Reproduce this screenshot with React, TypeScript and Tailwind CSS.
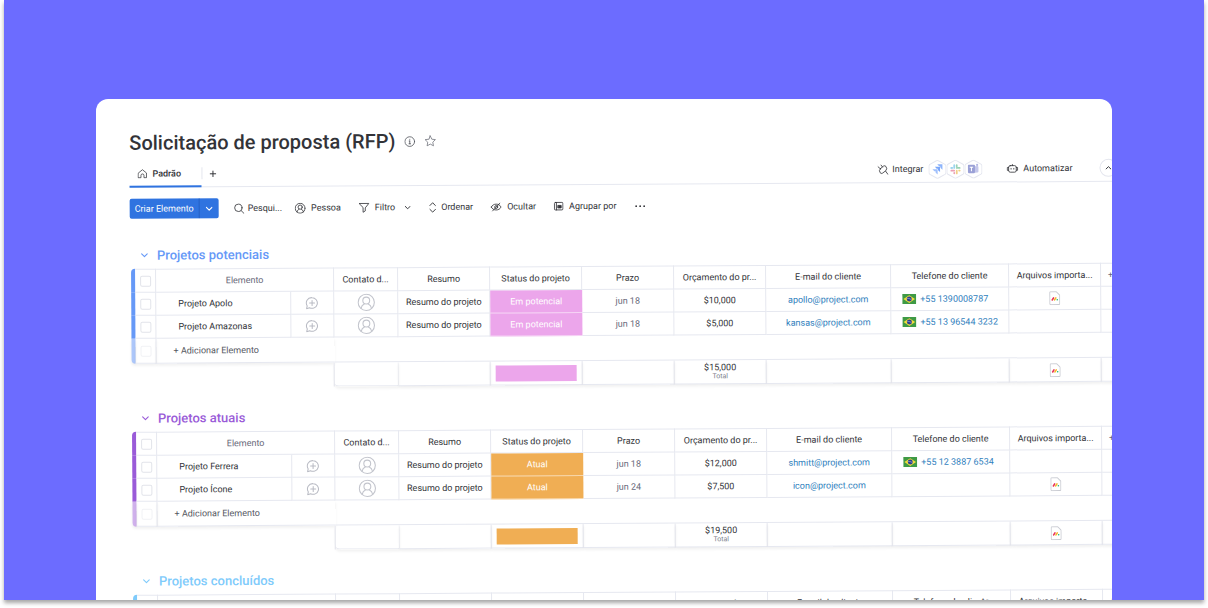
import type { ReactNode } from "react";

type Item = {
  name: string;
  date: string;
  budget: string;
  email: string;
  phone?: string;
  file?: boolean;
};

type Group = {
  title: string;
  text: string;
  bar: string;
  barLight: string;
  status: string;
  statusBg: string;
  total: string;
  items: Item[];
};

const GROUPS: Group[] = [
  {
    title: "Projetos potenciais",
    text: "text-[#6699f7]",
    bar: "bg-[#6699f7]",
    barLight: "bg-[#adc7fa]",
    status: "Em potencial",
    statusBg: "bg-[#eca6eb]",
    total: "$15,000",
    items: [
      { name: "Projeto Apolo", date: "jun 18", budget: "$10,000", email: "apollo@project.com", phone: "+55 1390008787", file: true },
      { name: "Projeto Amazonas", date: "jun 18", budget: "$5,000", email: "kansas@project.com", phone: "+55 13 96544 3232" },
    ],
  },
  {
    title: "Projetos atuais",
    text: "text-[#9a5bd8]",
    bar: "bg-[#9a5bd8]",
    barLight: "bg-[#d0b1ec]",
    status: "Atual",
    statusBg: "bg-[#f0ae54]",
    total: "$19,500",
    items: [
      { name: "Projeto Ferrera", date: "jun 18", budget: "$12,000", email: "shmitt@project.com", phone: "+55 12 3887 6534" },
      { name: "Projeto Ícone", date: "jun 24", budget: "$7,500", email: "icon@project.com", file: true },
    ],
  },
  {
    title: "Projetos concluídos",
    text: "text-[#7fcbfb]",
    bar: "bg-[#7fcbfb]",
    barLight: "bg-[#bfe5fd]",
    status: "Concluído",
    statusBg: "bg-[#7fcbfb]",
    total: "$0",
    items: [],
  },
];

const HEADERS = [
  "Contato d...",
  "Resumo",
  "Status do projeto",
  "Prazo",
  "Orçamento do pr...",
  "E-mail do cliente",
  "Telefone do cliente",
  "Arquivos importa...",
];

const CELL = "border-r border-b border-[#e6e8f0] p-0";

function Svg({ className, box = "0 0 20 20", width = 1.5, children }: { className: string; box?: string; width?: number; children: ReactNode }) {
  return (
    <svg
      className={`shrink-0 ${className}`}
      viewBox={box}
      fill="none"
      stroke="currentColor"
      strokeWidth={width}
      strokeLinecap="round"
      strokeLinejoin="round"
      aria-hidden="true"
    >
      {children}
    </svg>
  );
}

function Chevron({ className = "h-[7px] w-[7px]", up = false }: { className?: string; up?: boolean }) {
  return (
    <Svg className={className} box="0 0 10 10" width={1.6}>
      <path d={up ? "M1 7l4-4 4 4" : "M1 3l4 4 4-4"} />
    </Svg>
  );
}

function PersonIcon({ className, width = 1.4 }: { className: string; width?: number }) {
  return (
    <Svg className={className} width={width}>
      <circle cx="10" cy="10" r="9" />
      <circle cx="10" cy="8" r="3.8" />
      <path d="M4.2 16.6c.5-2.6 1.8-3.9 3.6-4.7M15.8 16.6c-.5-2.6-1.8-3.9-3.6-4.7" />
    </Svg>
  );
}

function CommentIcon() {
  return (
    <Svg className="mx-auto block h-[13px] w-[13px] text-[#b9bbc4]" width={1.6}>
      <path d="M10.5 1.5a8.2 8.2 0 1 1-4 15.4L2 18.4l1-4.2A8.2 8.2 0 0 1 10.5 1.5z" />
      <path d="M10.500 6v7.600M6.700 9.800h7.600" />
    </Svg>
  );
}

function FileIcon() {
  return (
    <svg className="mx-auto block h-[14px] w-[11px]" viewBox="0 0 11 14" fill="none" aria-hidden="true">
      <path d="M1.5.5H7L10.5 4v8.500a1 1 0 0 1-1 1h-8a1 1 0 0 1-1-1v-11a1 1 0 0 1 1-1z" fill="#fff" stroke="#c9cbd2" />
      <path d="M3 8.800l1.300-2.100" stroke="#e8345a" strokeWidth="1.600" strokeLinecap="round" />
      <path d="M5.300 8.800l1.300-2.100" stroke="#f5b92c" strokeWidth="1.600" strokeLinecap="round" />
      <circle cx="8" cy="8.600" r=".8" fill="#18b878" />
    </svg>
  );
}

function Flag() {
  return (
    <svg className="h-[10px] w-[14px] shrink-0" viewBox="0 0 14 10" aria-hidden="true">
      <rect width="14" height="10" fill="#3f9a45" />
      <path d="M7 1.100L12.800 5 7 8.900 1.200 5z" fill="#f3dc3c" />
      <circle cx="7" cy="5" r="2.500" fill="#2a3f8f" />
      <path d="M4.900 4.500c1.500-.3 3 .1 4.200 1.300" stroke="#fff" strokeWidth=".4" fill="none" />
    </svg>
  );
}

function Hex({ children }: { children: ReactNode }) {
  return (
    <svg className="h-[19px] w-[18px]" viewBox="0 0 18 19" fill="none" aria-hidden="true">
      <path d="M8 .9q1-.6 2 0l6.500 3.600q1 .6 1 1.600v6.800q0 1-1 1.600L10 18.100q-1 .6-2 0l-6.500-3.600q-1-.6-1-1.600V6.100q0-1 1-1.600z" stroke="#e4e6ef" />
      {children}
    </svg>
  );
}

function Check({ label, faded = false }: { label: string; faded?: boolean }) {
  return (
    <input
      type="checkbox"
      aria-label={label}
      className={`mx-auto block h-[11px] w-[11px] appearance-none rounded-[2px] border bg-white ${faded ? "border-[#f1f2f5]" : "border-[#e2e4ea]"}`}
    />
  );
}

function ToolButton({ children }: { children: ReactNode }) {
  return (
    <button type="button" className="flex items-center gap-[5px] whitespace-nowrap">
      {children}
    </button>
  );
}

function BoardHeader() {
  return (
    <header>
      <div className="flex h-7 items-center">
        <h1 className="text-[20px] font-medium whitespace-nowrap text-[#323338]">Solicitação de proposta (RFP)</h1>
        <button type="button" aria-label="Informações" className="ml-[9px]">
          <Svg className="h-[11px] w-[11px] text-[#55575f]">
            <circle cx="10" cy="10" r="8.8" />
            <path d="M10 9v5M9 9h1M8.600 14h2.800M10 5.800v.2" />
          </Svg>
        </button>
        <button type="button" aria-label="Favorito" className="ml-[9px]">
          <Svg className="h-3 w-3 text-[#70727b]" width={1.3}>
            <path d="M10 1.500l2.600 5.600 6 .7-4.400 4.200 1.100 6.100L10 15.200l-5.300 2.900L5.800 12 1.400 7.800l6-.7z" />
          </Svg>
        </button>
      </div>

      <div className="mt-1 flex h-[27px] items-stretch border-b border-[#e6e8f0]">
        <button type="button" className="-mb-px flex w-18 items-center gap-[5px] border-b-2 border-[#2f73e0] pt-px pl-2 text-[#323338]">
          <Svg className="h-[10px] w-[10px]">
            <path d="M2 8.500L10 2l8 6.500V18h-5v-4.500a3 3 0 0 0-6 0V18H2z" />
          </Svg>
          <span className="font-medium">Padrão</span>
        </button>
        <span className="my-[7px] w-px bg-[#e4e6ee]" />
        <button type="button" aria-label="Adicionar visualização" className="pl-[7px]">
          <Svg className="h-[7px] w-[7px]" box="0 0 10 10" width={1.4}>
            <path d="M5 1v8M1 5h8" />
          </Svg>
        </button>

        <div className="-mr-[5px] ml-auto flex items-center">
          <button type="button" className="flex items-center gap-1">
            <Svg className="h-[11px] w-[11px]">
              <path d="M5.500 8L11 3.500a3.500 3.500 0 0 1 4.600.8 6 6 0 0 1-.6 7.700l-5.800 4.300a3.300 3.300 0 0 1-4.400-.9 5.500 5.500 0 0 1 .7-7.400z" />
              <path d="M15 13l4 5.500M1 4.500l4.200 3.800M6.500 1.500L9.200 5" />
            </Svg>
            Integrar
          </button>
          <div className="ml-[5px] flex">
            <Hex>
              <path d="M14 4.500H8.800l1.900 2 1.200.1.100 1.400L14 9.800z" fill="#8db4fb" />
              <path d="M11.600 6.900H6.400l1.900 2 1.200.1.100 1.400 2 1.800z" fill="#79a6fa" />
              <path d="M9.200 9.300H4l1.900 2 1.200.1.100 1.400 2 1.800z" fill="#a0c0fc" />
            </Hex>
            <Hex>
              <g strokeWidth="1.8" strokeLinecap="round">
                <path d="M7.800 5.500v2.700M4.800 8.200h1" stroke="#9bd3ee" />
                <path d="M10.300 8.200h2.900M10.300 5.500v1" stroke="#9ad3b5" />
                <path d="M10.300 11v2.700M12.700 10.800h.5" stroke="#f1cf86" />
                <path d="M7.700 10.900H4.900M7.800 13.100v.5" stroke="#eca0b4" />
              </g>
            </Hex>
            <Hex>
              <rect x="9.500" y="6.500" width="4.500" height="6.500" rx="1" fill="#c3c6ea" />
              <circle cx="12.700" cy="5.300" r="1.100" fill="#b3b7e2" />
              <rect x="3.500" y="5" width="7" height="8.500" rx=".8" fill="#9aa0d6" />
              <path d="M5.300 7.500h3.400M7 7.500v4" stroke="#fff" />
            </Hex>
          </div>
          <button type="button" className="ml-6 flex items-center gap-[5px]">
            <Svg className="h-[11px] w-3" box="0 0 22 20">
              <rect x="4" y="4" width="14" height="12" rx="3" />
              <path d="M4 7.500H1.500v5H4M18 7.500h2.500v5H18M8.500 9v1.500M13.500 9v1.500M11 2v2" />
            </Svg>
            Automatizar
          </button>
          <button type="button" aria-label="Recolher" className="ml-[27px] flex h-[18px] w-[18px] items-center justify-center rounded-full border border-[#e4e6ee]">
            <Chevron className="h-[6px] w-[6px]" up />
          </button>
        </div>
      </div>
    </header>
  );
}

function Toolbar() {
  return (
    <div className="mt-[11px] flex h-5 items-center gap-[18px]">
      <div className="-mr-[3px] flex h-full overflow-hidden rounded-[2px] bg-[#2f73e0] text-white">
        <button type="button" className="px-[5px] whitespace-nowrap">
          Criar Elemento
        </button>
        <button type="button" aria-label="Mais opções de criação" className="border-l border-[#2560c4] px-[6px]">
          <Chevron />
        </button>
      </div>
      <button type="button" className="-mr-[5px] flex items-center gap-[3px] whitespace-nowrap">
        <Svg className="h-[11px] w-[11px]">
          <circle cx="8.5" cy="8.5" r="6.7" />
          <path d="M13.500 13.500L18.500 18.500" />
        </Svg>
        Pesqui...
      </button>
      <ToolButton>
        <PersonIcon className="h-[11px] w-[11px]" width={1.5} />
        Pessoa
      </ToolButton>
      <ToolButton>
        <Svg className="h-[11px] w-[11px]">
          <path d="M1.500 2h17l-6.500 8v5.500L8 18v-8z" />
        </Svg>
        Filtro
        <span className="ml-1">
          <Chevron className="h-[7px] w-[6px]" />
        </span>
      </ToolButton>
      <ToolButton>
        <Svg className="h-[11px] w-2" box="0 0 14 20" width={1.7}>
          <path d="M2 6.500L7 1.500l5 5M2 13.500l5 5 5-5" />
        </Svg>
        Ordenar
      </ToolButton>
      <ToolButton>
        <Svg className="h-[11px] w-[11px]">
          <path d="M1 10c2-3.500 5-5.300 9-5.300S17 6.500 19 10c-2 3.500-5 5.300-9 5.300S3 13.500 1 10z" />
          <circle cx="10" cy="10" r="2.7" />
          <path d="M3.500 17L16.500 3" />
        </Svg>
        Ocultar
      </ToolButton>
      <ToolButton>
        <Svg className="h-[10px] w-[10px]" width={1.7}>
          <rect x="1.500" y="2.500" width="17" height="15" rx="2" />
          <path d="M5.500 2.500v15" />
          <rect x="9" y="8.500" width="6" height="5" fill="currentColor" />
        </Svg>
        Agrupar por
      </ToolButton>
      <button type="button" aria-label="Mais">
        <svg className="h-[3px] w-[11px]" viewBox="0 0 11 3" fill="currentColor" aria-hidden="true">
          <circle cx="1.5" cy="1.5" r=".9" />
          <circle cx="5.5" cy="1.5" r=".9" />
          <circle cx="9.5" cy="1.5" r=".9" />
        </svg>
      </button>
    </div>
  );
}

function GroupTable({ group }: { group: Group }) {
  return (
    <section>
      <h2 className={`flex h-[27px] items-center gap-[9px] pl-[10px] text-[13px] font-medium ${group.text}`}>
        <Chevron />
        {group.title}
      </h2>
      <div className="-mr-7">
        <table className="w-full table-fixed border-separate border-spacing-0 text-center">
          <colgroup>
            <col className="w-1" />
            <col className="w-[21px]" />
            <col />
            <col className="w-[43px]" />
            <col className="w-16" />
            <col className="w-[92px]" />
            <col className="w-[92px]" />
            <col className="w-[92px]" />
            <col className="w-[92px]" />
            <col className="w-[125px]" />
            <col className="w-[118px]" />
            <col className="w-[92px]" />
            <col className="w-10" />
          </colgroup>
          <thead>
            <tr className="h-6">
              <td className={`rounded-tl-md p-0 ${group.bar}`} />
              <td className={`border-t ${CELL}`}>
                <Check label={`Selecionar ${group.title}`} />
              </td>
              <th scope="col" colSpan={2} className={`border-t font-normal text-[#676879] ${CELL}`}>
                Elemento
              </th>
              {HEADERS.map((h) => (
                <th key={h} scope="col" className={`border-t font-normal whitespace-nowrap ${CELL}`}>
                  {h}
                </th>
              ))}
              <th scope="col" className="border-t border-b border-[#e6e8f0] p-0 pl-[7px] text-left font-normal text-[#676879]">
                +
              </th>
            </tr>
          </thead>
          <tbody>
            {group.items.map((item) => (
              <tr key={item.name} className="h-[23px]">
                <td className={`p-0 ${group.bar}`} />
                <td className={CELL}>
                  <Check label={`Selecionar ${item.name}`} />
                </td>
                <td className={`text-left ${CELL}`}>
                  <span className="pl-[22px]">{item.name}</span>
                </td>
                <td className={CELL}>
                  <button type="button" aria-label={`Comentar ${item.name}`} className="block w-full">
                    <CommentIcon />
                  </button>
                </td>
                <td className={CELL}>
                  <PersonIcon className="mx-auto block h-[18px] w-[18px] text-[#c3c5cd]" width={1.2} />
                </td>
                <td className={CELL}>Resumo do projeto</td>
                <td className={`border-b border-white/50 p-0 text-white ${group.statusBg}`}>{group.status}</td>
                <td className={`text-[#676879] ${CELL}`}>{item.date}</td>
                <td className={CELL}>{item.budget}</td>
                <td className={CELL}>
                  <a href={`mailto:${item.email}`} className="text-[#2f80bd]">
                    {item.email}
                  </a>
                </td>
                <td className={CELL}>
                  {item.phone && (
                    <a href={`tel:${item.phone}`} className="flex items-center gap-1 pl-[11px] text-[#2f80bd]">
                      <Flag />
                      {item.phone}
                    </a>
                  )}
                </td>
                <td className={CELL}>{item.file && <FileIcon />}</td>
                <td className="border-b border-[#e6e8f0] p-0" />
              </tr>
            ))}
            <tr className="h-[25px]">
              <td className={`rounded-bl-md p-0 shadow-[0_2px_3px_rgba(0,0,0,0.08)] ${group.barLight}`} />
              <td className={`shadow-[0_2px_3px_rgba(0,0,0,0.06)] ${CELL}`}>
                <Check label="Novo elemento" faded />
              </td>
              <td colSpan={2} className="border-b border-[#e6e8f0] p-0 text-left text-[#55575f] shadow-[0_2px_3px_rgba(0,0,0,0.06)]">
                <button type="button" className="pl-[17px]">
                  + Adicionar Elemento
                </button>
              </td>
              <td colSpan={9} className="border-b border-[#e6e8f0] p-0" />
            </tr>
          </tbody>
          <tfoot>
            <tr className="h-6">
              <td colSpan={4} className="border-r border-[#e6e8f0] p-0" />
              <td className={`rounded-bl-[4px] shadow-[0_2px_3px_rgba(0,0,0,0.06)] ${CELL}`} />
              <td className={`shadow-[0_2px_3px_rgba(0,0,0,0.06)] ${CELL}`} />
              <td className="border-r border-b border-[#e6e8f0] px-[5px] py-0 shadow-[0_2px_3px_rgba(0,0,0,0.06)]">
                <div className={`h-4 ${group.statusBg}`} />
              </td>
              <td className={`shadow-[0_2px_3px_rgba(0,0,0,0.06)] ${CELL}`} />
              <td className={`shadow-[0_2px_3px_rgba(0,0,0,0.06)] ${CELL}`}>
                <div className="leading-[9px]">{group.total}</div>
                <div className="text-[7px] leading-[8px] text-[#7d7f8c]">Total</div>
              </td>
              <td className={`shadow-[0_2px_3px_rgba(0,0,0,0.06)] ${CELL}`} />
              <td className={`shadow-[0_2px_3px_rgba(0,0,0,0.06)] ${CELL}`} />
              <td className={`shadow-[0_2px_3px_rgba(0,0,0,0.06)] ${CELL}`}>
                <FileIcon />
              </td>
              <td className="border-b border-[#e6e8f0] p-0 shadow-[0_2px_3px_rgba(0,0,0,0.06)]" />
            </tr>
          </tfoot>
        </table>
      </div>
    </section>
  );
}

export default function App() {
  return (
    <div className="h-screen overflow-hidden bg-white px-1 pb-2 font-['Roboto',sans-serif]">
      <div className="h-full bg-[#6c6cff] px-[92px] pt-[99px] shadow-[0_3px_4px_rgba(0,0,0,0.35)]">
        <main className="h-full overflow-hidden rounded-t-xl bg-white">
          {/* the whole board leans slightly upwards to the right */}
          <div className="origin-top-left rotate-[-0.35deg] pt-[30px] pl-[33px] text-[9px] leading-3 text-[#323338]">
            <BoardHeader />
            <Toolbar />
            <div className="flex flex-col gap-[17px] pt-[23px] pl-px">
              {GROUPS.map((g) => (
                <GroupTable key={g.title} group={g} />
              ))}
            </div>
          </div>
        </main>
      </div>
    </div>
  );
}
